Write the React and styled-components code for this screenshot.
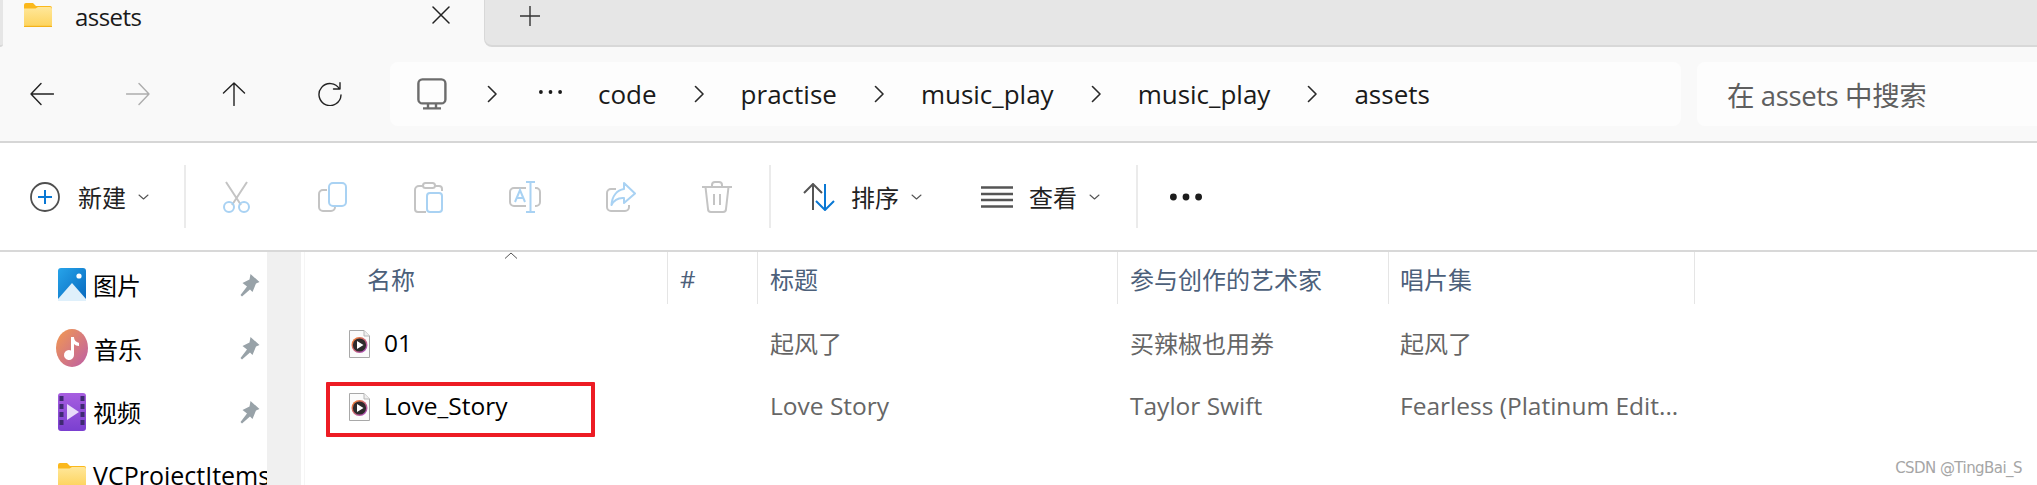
import React from "react";
import styled, { createGlobalStyle } from "styled-components";

const Global = createGlobalStyle`
  html, body { margin: 0; padding: 0; background: #fff; }
  body { font-family: "Open Sans", "Noto Sans CJK SC", sans-serif; overflow: hidden; }
`;

const Page = styled.div`
  width: 2037px; height: 485px; position: relative; overflow: hidden; background: #fff;
  display: flex; flex-direction: column; font-size: 24px;
`;
const TabStrip = styled.div`display: flex; height: 47px; background: #f9f9f9; flex: none;`;
const TabEdge = styled.div`width: 3px; background: #e6e6e6; border-bottom: 2px solid #d8d8d8; border-bottom-right-radius: 6px; box-sizing: border-box;`;
const ActiveTab = styled.div`
  width: 481px; display: flex; align-items: flex-start; padding: 3px 34px 0 21px; box-sizing: border-box; color: #1a1a1a;
`;
const TabTitle = styled.span`margin-left: 23px; flex: 1; line-height: 28px; letter-spacing: -0.55px;`;
const CloseBox = styled.span`display: flex; margin-top: 3px;`;
const RestStrip = styled.div`
  flex: 1; background: #e6e6e6; border-left: 1px solid #d8d8d8; border-bottom: 2px solid #d8d8d8;
  border-bottom-left-radius: 8px; padding: 6px 0 0 35px; box-sizing: border-box; display: flex; align-items: flex-start;
`;
const NavBand = styled.div`
  height: 94px; flex: none; background: #f9f9f9; display: flex; align-items: center; padding-left: 30px;
  border-bottom: 2px solid #d6d6d6;
`;
const NavIcons = styled.div`display: flex; gap: 72px; margin-right: 48px;`;
const AddressBar = styled.div`
  width: 1291px; height: 64px; background: #fdfdfd; border-radius: 8px; display: flex; align-items: center;
  padding-left: 27px; box-sizing: border-box; gap: 37px; color: #1a1a1a; flex: none;
`;
const Lead = styled.span`display: flex; margin-left: ${p => p.$ml}px; margin-top: ${p => p.$mt || 0}px;`;
const Crumb = styled.span`font-size: 26px; line-height: 64px; margin-left: ${p => p.$ml || 0}px;`;
const SearchBox = styled.div`
  flex: 1; margin-left: 16px; height: 64px; background: #fdfdfd; border-radius: 8px 0 0 8px; display: flex; align-items: center;
  padding-left: 30px; color: #5f5f5f; letter-spacing: -0.4px; font-size: 27.5px;
`;
const Toolbar = styled.div`
  height: 107px; flex: none; display: flex; align-items: center; padding-left: 30px; background: #fff;
  border-bottom: 2px solid #d8d8d8; color: #222;
`;
const SplitButton = styled.div`display: flex; align-items: center; margin-left: ${p => p.$ml || 0}px;`;
const SplitLabel = styled.span`width: 48px; margin: 2px 12px 0 ${p => p.$gap}px; line-height: 32px;`;
const Divider = styled.div`width: 2px; height: 63px; background: #ebebeb; margin-left: ${p => p.$ml}px; margin-right: ${p => p.$mr}px;`;
const Slot = styled.div`width: 96px; display: flex; justify-content: center;`;
const Body = styled.div`flex: 1; display: flex; min-height: 0;`;
const Sidebar = styled.div`width: 267px; overflow: hidden; padding-top: 1px; flex: none; color: #000;`;
const NavRow = styled.div`
  display: flex; align-items: center; height: 63.5px; padding-left: 58px; white-space: nowrap; position: relative;
  svg { flex: none; }
`;
const NavLabel = styled.span`margin-left: 7px; flex: 1; font-size: ${p => p.$size}px;`;
const PinBox = styled.span`display: flex; margin-right: 7px;`;
const Gutter = styled.div`width: 33px; background: #f0f0f0; flex: none; border-right: 1px solid #f0f0f0;`;
const Main = styled.div`flex: 1; margin-left: 3px; position: relative; border-left: 1px solid #f5f5f5;`;
const columns = "363px 90px 360px 271px 306px";
const HeaderRow = styled.div`
  display: grid; grid-template-columns: ${columns}; height: 52px; position: relative; color: #4c607a; margin-bottom: 8px; width: 1390px;
`;
const HeaderCell = styled.div`
  border-right: 1px solid #e5e5e5; display: flex; align-items: center; box-sizing: border-box;
  padding-left: ${p => p.$pad}px;
`;
const SortCaret = styled.svg`position: absolute; left: 199px; top: 0;`;
const FileRow = styled.div`
  display: grid; grid-template-columns: ${columns}; height: 63px; position: relative; color: #666; align-items: center; width: 1390px;
  font-size: ${p => p.$size}px;
`;
const NameCell = styled.div`display: flex; align-items: center; padding-left: 44px; color: #000; gap: 14px;`;
const FileName = styled.span`margin-bottom: 2px; font-size: 24.5px;`;
const Cell = styled.div`grid-column: ${p => p.$col}; padding-left: ${p => p.$pad}px; white-space: nowrap; margin-bottom: 2px;`;
const Highlight = styled.div`
  position: absolute; left: 21px; top: 7px; width: 269px; height: 55px; border: 4px solid #ed1c24; box-sizing: border-box; border-radius: 1px; pointer-events: none;
`;
const Watermark = styled.div`
  position: absolute; right: 15px; bottom: 8px; font: 15px/18px "DejaVu Sans", sans-serif; letter-spacing: -0.55px; color: #a6a6a6;
`;

const Line = ({ w = 24, h = 24, vb, color = "#222", sw = 1.4, d, children }) => (
  <svg width={w} height={h} viewBox={vb || `0 0 ${w} ${h}`} fill="none" stroke={color} strokeWidth={sw} strokeLinecap="round" strokeLinejoin="round">
    {d && <path d={d} />}
    {children}
  </svg>
);
const Chevron = () => <Line w={10} h={18} sw={1.6} d="M1.5 1.5 L9 9 L1.5 16.5" color="#2a2a2a" />;
const Caret = () => <Line w={11} h={6} sw={1.1} color="#555" d="M1 1 L5.5 5 L10 1" />;

const Folder = ({ w = 28, h = 24 }) => (
  <svg width={w} height={h} viewBox="0 0 28 24">
    <defs><linearGradient id="fold" x1="0" y1="0" x2="0" y2="1"><stop offset="0" stopColor="#ffe79a" /><stop offset="1" stopColor="#fdd35c" /></linearGradient></defs>
    <path d="M0 2a2 2 0 0 1 2-2h7l3 3h14a2 2 0 0 1 2 2v3H0z" fill="#fbb81c" />
    <path d="M0 5.5h11.5l2.5-1.5H26a2 2 0 0 1 2 2v16a2 2 0 0 1-2 2H2a2 2 0 0 1-2-2z" fill="url(#fold)" />
    <rect x="0" y="22.8" width="28" height="1.2" fill="#f4b21a" />
  </svg>
);
const Refresh = () => <Line d="M23 13 A11 11 0 1 1 21.5 7 M22 .8 V7 H15.5" sw={1.4} />;
const Monitor = () => (
  <svg width="30" height="32" viewBox="0 0 30 32" fill="none" stroke="#6c6c6c" strokeWidth="2.4">
    <rect x="1.4" y="1.4" width="27" height="24" rx="4" />
    <path d="M11 26v4 M19 26v4 M6 30.4h18" />
  </svg>
);
const PlusCircle = () => (
  <svg width="30" height="30" viewBox="0 0 30 30" fill="none">
    <circle cx="15" cy="15" r="14" stroke="#4f4f4f" strokeWidth="1.8" />
    <path d="M15 8v14 M8 15h14" stroke="#0a78d4" strokeWidth="2" />
  </svg>
);
const GRAY = "#c4c4c4";
const BLUE = "#a9d2f3";
const Scissors = () => (
  <svg width="30" height="32" viewBox="0 0 30 32" fill="none" strokeWidth="2">
    <path d="M4 1 L19 24 M25 1 L10 24" stroke={GRAY} />
    <circle cx="7" cy="26" r="5" stroke={BLUE} />
    <circle cx="22" cy="26" r="5" stroke={BLUE} />
  </svg>
);
const Copy = () => (
  <svg width="30" height="32" viewBox="0 0 30 32" fill="none" strokeWidth="2">
    <path d="M9 9H5a4 4 0 0 0-4 4v13a4 4 0 0 0 4 4h8a4 4 0 0 0 4-4" stroke={GRAY} />
    <rect x="11" y="2" width="17" height="23" rx="4" stroke={BLUE} />
  </svg>
);
const Paste = () => (
  <svg width="30" height="32" viewBox="0 0 30 32" fill="none" strokeWidth="2">
    <path d="M9 5H5a4 4 0 0 0-4 4v19a3 3 0 0 0 3 3h8 M21 5h4a3 3 0 0 1 3 3v2" stroke={GRAY} />
    <rect x="9" y="2" width="12" height="5" rx="2.5" stroke={GRAY} />
    <rect x="13" y="12" width="15" height="19" rx="3" stroke={BLUE} />
  </svg>
);
const Rename = () => (
  <svg width="32" height="32" viewBox="0 0 32 32" fill="none" strokeWidth="2">
    <path d="M17 7H5a4 4 0 0 0-4 4v10a4 4 0 0 0 4 4h12 M26 7h1a4 4 0 0 1 4 4v10a4 4 0 0 1-4 4h-1" stroke={GRAY} />
    <path d="M17 1h9 M21.5 1v30 M17 31h9" stroke={BLUE} />
    <path d="M6 21 L11 9 L16 21 M8 17h6" stroke={BLUE} />
  </svg>
);
const Share = () => (
  <svg width="30" height="32" viewBox="0 0 30 32" fill="none" strokeWidth="2" strokeLinejoin="round">
    <path d="M10 8H5a4 4 0 0 0-4 4v14a4 4 0 0 0 4 4h14a4 4 0 0 0 4-4v-2" stroke={GRAY} />
    <path d="M18 2 L29 12.5 L18 22 V17 C12 16.5 8 19 5.5 24 C6 15 11 9 18 8 Z" stroke={BLUE} />
  </svg>
);
const Trash = () => (
  <svg width="30" height="32" viewBox="0 0 30 32" fill="none" stroke={GRAY} strokeWidth="2">
    <path d="M0 6h30 M10 6V4a3 3 0 0 1 3-3h4a3 3 0 0 1 3 3v2 M3.5 6l2.5 22a3 3 0 0 0 3 3h12a3 3 0 0 0 3-3l2.5-22 M12 13v11 M18 13v11" />
  </svg>
);
const SortIcon = () => (
  <svg width="32" height="28" viewBox="0 0 32 28" fill="none" strokeWidth="2">
    <path d="M10 27V1 M1 10 L10 1 L19 10" stroke="#555" />
    <path d="M22 1v26 M13 18 L22 27 L31 18" stroke="#0a78d4" />
  </svg>
);
const ListIcon = () => (
  <svg width="32" height="22" viewBox="0 0 32 22" stroke="#555" strokeWidth="2.4">
    <path d="M0 1.5h32 M0 8h32 M0 14h32 M0 20.5h32" />
  </svg>
);
const Dots = ({ w = 32, r = 3.4, h = 8, color = "#1c1c1c" }) => (
  <svg width={w} height={h} viewBox={`0 0 ${w} ${h}`} fill={color}>
    <circle cx={r} cy={h / 2} r={r} /><circle cx={w / 2} cy={h / 2} r={r} /><circle cx={w - r} cy={h / 2} r={r} />
  </svg>
);
const PictureIcon = () => (
  <svg width="28" height="33" viewBox="0 0 28 33">
    <defs><linearGradient id="pic" x1="0" y1="0" x2="1" y2="1"><stop offset="0" stopColor="#27a4ea" /><stop offset="1" stopColor="#0768bd" /></linearGradient></defs>
    <rect width="28" height="33" rx="3" fill="url(#pic)" />
    <circle cx="21" cy="8" r="2.6" fill="#fff" />
    <path d="M0 31 L14 15 L28 31 V33 H0 Z" fill="#dff0fb" />
  </svg>
);
const MusicIcon = () => (
  <svg width="32" height="38" viewBox="0 0 32 38" style={{ marginLeft: -2, marginRight: -1 }}>
    <defs><linearGradient id="mus" x1="0" y1="0" x2="1" y2="1"><stop offset="0" stopColor="#f39a4f" /><stop offset="1" stopColor="#bd5ea6" /></linearGradient></defs>
    <ellipse cx="16" cy="19" rx="16" ry="19" fill="url(#mus)" />
    <path d="M15 8 h3 c0 4 3 5 5 6 v3 c-2 0-4-1-5-2 v11 a5 5 0 1 1-3-4.6 z" fill="#fff" />
  </svg>
);
const VideoIcon = () => (
  <svg width="28" height="38" viewBox="0 0 28 38">
    <defs><linearGradient id="vid" x1="0" y1="0" x2="0" y2="1"><stop offset="0" stopColor="#a75ee0" /><stop offset="1" stopColor="#7a3fd0" /></linearGradient></defs>
    <rect width="28" height="38" rx="3" fill="url(#vid)" />
    {[3, 11, 19, 27].map(y => (
      <g key={y} fill="#3e2a72">
        <rect x="1.5" y={y} width="4" height="5" /><rect x="22.5" y={y} width="4" height="5" />
      </g>
    ))}
    <path d="M9 11 L21 19 L9 27 Z" fill="#e8dcfa" />
  </svg>
);
const FileIcon = ({ id }) => (
  <svg width="21" height="28" viewBox="0 0 21 28">
    <defs><linearGradient id={id} x1="0" y1="0" x2="1" y2="1"><stop offset="0" stopColor="#f58220" /><stop offset="1" stopColor="#a24bd0" /></linearGradient></defs>
    <path d="M.5.5 H15 L20.5 6 V27.5 H.5 Z" fill="#fbfbfb" stroke="#a8a8a8" />
    <path d="M15 .5 V6 H20.5" fill="#eee" stroke="#b8b8b8" />
    <circle cx="10.5" cy="15" r="8" fill={`url(#${id})`} />
    <circle cx="10.5" cy="15" r="6.6" fill="#2e2a2c" />
    <path d="M8 11 L14.5 15 L8 19 Z" fill="#fff" />
  </svg>
);
const Pin = () => (
  <svg width="21" height="24" viewBox="0 0 21 24" fill="#98a2a8">
    <path d="M11.5 1 L20.5 9 L17 10.5 L13.5 19 L11 16.5 L3 23.5 L1.5 22 L8 13.5 L3.5 10 L10.5 6.5 Z" />
  </svg>
);
const Close = () => <Line w={18} h={18} sw={1.5} d="M1 1 L17 17 M17 1 L1 17" color="#222" />;
const Plus = () => <Line w={20} h={20} sw={1.4} d="M10 0V20 M0 10H20" color="#333" />;

const crumbs = ["code", "practise", "music_play", "music_play", "assets"];
const tools = [Scissors, Copy, Paste, Rename, Share, Trash];
const places = [
  { label: "图片", Icon: PictureIcon, pin: true, size: 24 },
  { label: "音乐", Icon: MusicIcon, pin: true, size: 24 },
  { label: "视频", Icon: VideoIcon, pin: true, size: 24 },
  { label: "VCProjectItems", Icon: Folder, pin: false, size: 25 },
];
const headers = [["名称", 62], ["#", 12], ["标题", 12], ["参与创作的艺术家", 12], ["唱片集", 11]];
const files = [
  { name: "01", title: "起风了", artist: "买辣椒也用券", album: "起风了", size: 24 },
  { name: "Love_Story", title: "Love Story", artist: "Taylor Swift", album: "Fearless (Platinum Edit...", size: 24.5, marked: true },
];

export default function App() {
  return (
    <Page>
      <Global />
      <TabStrip>
        <TabEdge />
        <ActiveTab>
          <Folder />
          <TabTitle>assets</TabTitle>
          <CloseBox><Close /></CloseBox>
        </ActiveTab>
        <RestStrip><Plus /></RestStrip>
      </TabStrip>
      <NavBand>
        <NavIcons>
          <Line d="M23.5 12H1 M11 1.5 L1 12 L11 22.5" />
          <Line color="#adadad" d="M.5 12H23 M13 1.5 L23 12 L13 22.5" />
          <Line d="M12 23.5V1 M1.5 11 L12 1 L22.5 11" />
          <Refresh />
        </NavIcons>
        <AddressBar>
          <Monitor />
          <Lead $ml={3}><Chevron /></Lead>
          <Lead $ml={5} $mt={-4}><Dots w={23} r={1.9} h={6} /></Lead>
          {crumbs.map((c, i) => (
            <React.Fragment key={i}>
              <Crumb $ml={i === 0 ? -1 : 0}>{c}</Crumb>
              {i < crumbs.length - 1 && <Chevron />}
            </React.Fragment>
          ))}
        </AddressBar>
        <SearchBox>在 assets 中搜索</SearchBox>
      </NavBand>
      <Toolbar>
        <SplitButton>
          <PlusCircle /><SplitLabel $gap={18}>新建</SplitLabel><Caret />
        </SplitButton>
        <Divider $ml={35} $mr={3} />
        {tools.map((T, i) => <Slot key={i}><T /></Slot>)}
        <Divider $ml={4} $mr={0} />
        <SplitButton $ml={32}>
          <SortIcon /><SplitLabel $gap={16}>排序</SplitLabel><Caret />
        </SplitButton>
        <SplitButton $ml={59}>
          <ListIcon /><SplitLabel $gap={16}>查看</SplitLabel><Caret />
        </SplitButton>
        <Divider $ml={36} $mr={32} />
        <Dots />
      </Toolbar>
      <Body>
        <Sidebar>
          {places.map(({ label, Icon, pin, size }) => (
            <NavRow key={label}>
              <Icon />
              <NavLabel $size={size}>{label}</NavLabel>
              {pin && <PinBox><Pin /></PinBox>}
            </NavRow>
          ))}
        </Sidebar>
        <Gutter />
        <Main>
          <HeaderRow>
            {headers.map(([h, pad]) => <HeaderCell key={h} $pad={pad}>{h}</HeaderCell>)}
            <SortCaret width="14" height="7" viewBox="0 0 14 7" fill="none" stroke="#555" strokeWidth="1"><path d="M1 6.5 L7 1 L13 6.5" /></SortCaret>
          </HeaderRow>
          {files.map((f, i) => (
            <FileRow key={f.name} $size={f.size}>
              <NameCell><FileIcon id={`disc${i}`} /><FileName>{f.name}</FileName></NameCell>
              <Cell $col={3} $pad={12}>{f.title}</Cell>
              <Cell $col={4} $pad={12}>{f.artist}</Cell>
              <Cell $col={5} $pad={11}>{f.album}</Cell>
              {f.marked && <Highlight />}
            </FileRow>
          ))}
        </Main>
      </Body>
      <Watermark>CSDN @TingBai_S</Watermark>
    </Page>
  );
}
